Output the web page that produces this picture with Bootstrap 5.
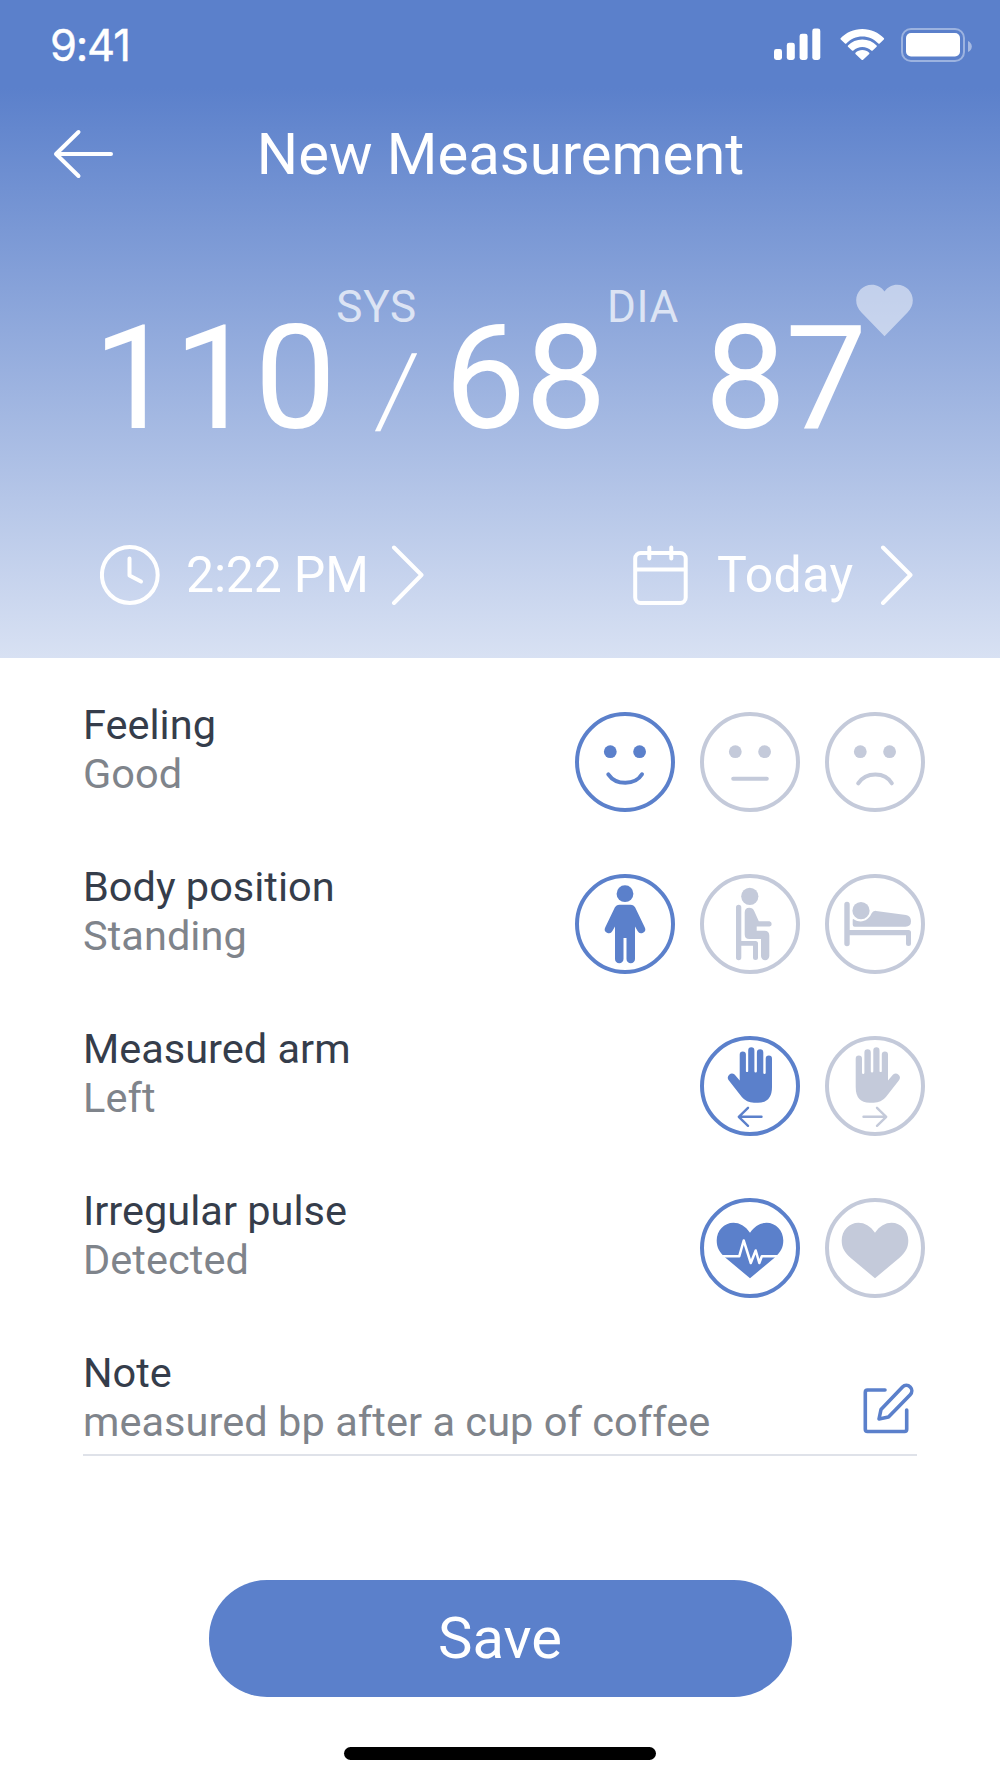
<!DOCTYPE html>
<html lang="en">
<head>
<meta charset="utf-8">
<meta name="viewport" content="width=device-width, initial-scale=1">
<title>New Measurement</title>
<link href="https://cdn.jsdelivr.net/npm/bootstrap@5.3.0/dist/css/bootstrap.min.css" rel="stylesheet">
<style>
  :root { --brand: #5b80cb; --idle: #c4cada; --ink: #353d4b; --soft: #7f848b; }
  body { font-family: Roboto, "Liberation Sans", sans-serif; color: var(--ink); background: #fff; }
  .screen { width: 1000px; height: 1778px; overflow: hidden; }
  svg { display: block; flex: none; }
  .stroked { fill: none; stroke: currentColor; stroke-width: 4; stroke-linecap: round; stroke-linejoin: round; }
  .stroked-fine { stroke-width: 2.4; }
  .bare { background: none; border: 0; padding: 0; color: inherit; }

  .hero { height: 658px; background: linear-gradient(180deg, var(--brand) 88px, #d8e1f3 658px); color: #fff; }
  .status-bar { height: 88px; padding: 0 27px 0 50px; }
  .clock-text { font: 400 43.5px/52px Inter, sans-serif; letter-spacing: -1.2px; margin-top: 19px; -webkit-text-stroke: .4px #fff; }
  .status-icons { padding-top: 28px; }
  .title-bar { height: 68px; margin-top: 32px; padding: 0 52px 0 53px; }
  .title-bar h1 { font-size: 58px; line-height: 68px; font-weight: 400; }
  .back-slot { width: 60px; }

  .readings { height: 167px; margin-top: 96px; padding-left: 93px; }
  .digits { font-size: 145.5px; line-height: 146px; letter-spacing: -1px; margin-top: 22px; }
  .unit { font-size: 44px; line-height: 44px; letter-spacing: .7px; opacity: .7; margin-top: 1px; }
  .sys-col { width: 109px; }
  .sys-col .unit { margin-left: 1px; }
  .dia-col { width: 98.6px; }
  .dia-col .unit { margin-left: 1px; }
  .divide { font-size: 101px; line-height: 103px; font-weight: 300; margin: 10px 0 0 42px; transform: skewX(-5deg); }
  .pulse-heart { margin-left: -10px; opacity: .5; }

  .when { margin-top: 94px; padding: 0 87px 0 100px; height: 60px; }
  .when button { font-size: 50px; line-height: 60px; }
  .when .time-label { margin: 0 22px 0 26px; letter-spacing: -.2px; }
  .when .day-label { margin: 0 26.5px 0 29px; letter-spacing: .4px; }

  .form-rows { padding: 42px 75px 0 83px; }
  .entry { height: 162px; }
  .entry-text { font-size: 41.5px; line-height: 49px; }
  .entry-text .value { color: var(--soft); letter-spacing: .05px; }
  .choices { gap: 25px; padding-top: 12px; }
  .choice { width: 100px; height: 100px; border: 4px solid currentColor; border-radius: 50%; background: none; padding: 0; color: var(--idle); }
  .choice.active { color: var(--brand); }
  .choice svg { width: 92px; height: 92px; fill: currentColor; }
  .note { height: 108px; margin-right: 8px; border-bottom: 2px solid #dfe2e9; }
  .note .edit { color: var(--brand); padding: 34px 1px 0 0; }
  .note .edit svg { stroke-width: 3.6; }
  .save { width: 583px; height: 117px; margin-top: 124px; border-radius: 58px; background: var(--brand); color: #fff; font-size: 58px; line-height: 68px; padding: 0 0 1px; border: 0; }
  .home-bar { width: 312px; height: 13px; margin-top: 50px; border-radius: 7px; background: #000; }
</style>
</head>
<body>
<main class="screen d-flex flex-column">
  <header class="hero">
    <div class="status-bar d-flex justify-content-between align-items-start">
      <span class="clock-text">9:41</span>
      <div class="status-icons">
        <svg width="199" height="34" viewBox="774 28 199 34" fill="#fff">
          <rect x="774" y="49" width="8" height="11" rx="2.4"/><rect x="786.8" y="42.7" width="8" height="17.300" rx="2.4"/><rect x="799.6" y="33.700" width="8" height="26.300" rx="2.4"/><rect x="812.3" y="28.500" width="8" height="31.500" rx="2.4"/>
          <path d="M862.3 29C871 29 878.500 32.500 884 38.300Q884.400 39 883.800 39.600L879.700 43.500Q879 44 878.300 43.400C874 39 868.500 36.400 862.300 36.400S850.600 39 846.300 43.400Q845.600 44 845 43.500L840.800 39.600Q840.200 39 840.600 38.300C846 32.500 853.600 29 862.300 29Z"/>
          <path d="M862.3 39.600C868 39.600 873 41.800 876.600 45.500Q877.200 46.200 876.600 46.800L872.700 50.500Q872 51.100 871.200 50.500C868.800 48.300 865.700 47 862.300 47S855.800 48.300 853.400 50.500Q852.700 51.100 852 50.500L848 46.800Q847.400 46.200 848 45.500C851.700 41.800 856.700 39.600 862.300 39.600Z"/>
          <path d="M862.3 50C865 50 867.400 51 869.200 52.800Q869.700 53.400 869.200 54L863.100 59.700Q862.300 60.400 861.600 59.700L855.500 54Q855 53.400 855.500 52.800C857.300 51 859.700 50 862.300 50Z"/>
          <rect x="902" y="29" width="62" height="32" rx="9" fill="none" stroke="#fff" stroke-opacity=".4" stroke-width="2"/>
          <rect x="906" y="33" width="54" height="23.500" rx="5"/>
          <path d="M968 41Q971.800 43 971.800 46.500T968 52Z" fill-opacity=".45"/>
        </svg>
      </div>
    </div>

    <div class="title-bar d-flex justify-content-between align-items-center">
      <button class="bare back-slot" aria-label="Back">
        <svg class="stroked" width="60" height="50" viewBox="0 0 60 50"><path d="M25.500 3L3 25L25.500 47M3.500 25H58"/></svg>
      </button>
      <h1 class="m-0">New Measurement</h1>
      <span class="back-slot"></span>
    </div>

    <section class="readings d-flex align-items-start">
      <div class="digits">110</div>
      <div class="sys-col d-flex flex-column align-items-start">
        <span class="unit">SYS</span>
        <span class="divide">/</span>
      </div>
      <div class="digits">68</div>
      <div class="dia-col"><div class="unit">DIA</div></div>
      <div class="digits">87</div>
      <svg class="pulse-heart" width="57" height="53" viewBox="0 0 57 53" fill="#fff"><path d="M28.500 7.400C25.500 3 20.700.7 16 .7C7 .7.2 7.700.2 16.300C.2 21 2 25 5.500 28.500L28.500 52.200L51.500 28.500C55 25 56.800 21 56.800 16.300C56.800 7.700 50 .7 41 .7C36.300.7 31.500 3 28.500 7.400Z"/></svg>
    </section>

    <section class="when d-flex justify-content-between">
      <button class="bare d-flex">
        <svg class="stroked" width="60" height="60" viewBox="0 0 60 60"><circle cx="29.800" cy="30" r="27.900"/><path d="M29.500 13.500V30.500L41 36.500"/></svg>
        <span class="time-label">2:22 PM</span>
        <svg class="stroked" width="33" height="60" viewBox="0 0 33 60"><path d="M3 2.500L30.500 30L3 58"/></svg>
      </button>
      <button class="bare d-flex">
        <svg class="stroked" width="55" height="60" viewBox="0 0 55 60"><rect x="2.200" y="8" width="50.500" height="50" rx="5.500"/><path d="M3 24.500H52M16.300 2.500V13.500M38.300 2.500V13.500"/></svg>
        <span class="day-label">Today</span>
        <svg class="stroked" width="33" height="60" viewBox="0 0 33 60"><path d="M3 2.500L30.500 30L3 58"/></svg>
      </button>
    </section>
  </header>

  <section class="form-rows">
    <div class="entry d-flex justify-content-between align-items-start">
      <div class="entry-text"><div>Feeling</div><div class="value">Good</div></div>
      <div class="choices d-flex">
        <button class="choice active" aria-label="Good"><svg viewBox="4 4 92 92"><circle cx="35.300" cy="39.700" r="6.400"/><circle cx="64.600" cy="39.700" r="6.400"/><path class="stroked" d="M33.300 62.300C41 73.600 60 73.600 67 62.300"/></svg></button>
        <button class="choice" aria-label="Neutral"><svg viewBox="4 4 92 92"><circle cx="35.300" cy="39.700" r="6.400"/><circle cx="64.600" cy="39.700" r="6.400"/><path class="stroked" d="M33.200 66.800H66.800"/></svg></button>
        <button class="choice" aria-label="Bad"><svg viewBox="4 4 92 92"><circle cx="35.300" cy="39.700" r="6.400"/><circle cx="64.600" cy="39.700" r="6.400"/><path class="stroked" d="M33.200 71.300C41 59.500 60 59.500 66.800 71.300"/></svg></button>
      </div>
    </div>

    <div class="entry d-flex justify-content-between align-items-start">
      <div class="entry-text"><div>Body position</div><div class="value">Standing</div></div>
      <div class="choices d-flex">
        <button class="choice active" aria-label="Standing"><svg viewBox="4 4 92 92"><circle cx="50" cy="19.700" r="8.400"/><path d="M44.500 30.700H55.500Q58.800 30.700 60.200 33.600L69.700 53.200A4 4 0 0 1 62.600 57L60 52.500V85A4.200 4.200 0 0 1 51.500 85V64H48.500V85A4.200 4.200 0 0 1 40 85V52.500L37.400 57A4 4 0 0 1 30.300 53.200L39.800 33.600Q41.200 30.700 44.500 30.700Z"/></svg></button>
        <button class="choice" aria-label="Sitting"><svg viewBox="4 4 92 92"><circle cx="49.800" cy="22.300" r="8.600"/><path d="M36 33.300A2.600 2.600 0 0 1 41.300 33.300V67H55.500Q58 67 58 69.500V83.500A2.500 2.500 0 0 1 53 83.500V71.800H41.300V83.500A2.600 2.600 0 0 1 36 83.500Z"/><path d="M44.700 38.500Q44.700 33.700 49.300 33.700Q52.700 33.700 54.200 37L58.800 47.300H69.500A2.700 2.700 0 0 1 69.500 52.600H56.700V56.700H64.500Q69.300 56.700 69.300 61.500V82A4 4 0 0 1 61 82V65H49.500Q44.700 65 44.700 60.500Z"/></svg></button>
        <button class="choice" aria-label="Lying"><svg viewBox="4 4 92 92"><circle cx="36" cy="36.700" r="8.600"/><path d="M19.300 30.500A2.700 2.700 0 0 1 24.700 30.500V56H83.500Q86 56 86 58.500V69.500A2.500 2.500 0 0 1 81 69.500V61.300H24.700V69.500A2.700 2.700 0 0 1 19.300 69.500Z"/><path d="M27.700 45.800Q27.700 44.800 28.700 45.200C36 50 43.500 46.500 46.500 39.500Q48 36.600 51 36.900L81 41Q86 42 86 47.300Q86 52.700 80.500 52.700H29.700Q27.700 52.700 27.700 50.700Z"/></svg></button>
      </div>
    </div>

    <div class="entry d-flex justify-content-between align-items-start">
      <div class="entry-text"><div>Measured arm</div><div class="value">Left</div></div>
      <div class="choices d-flex">
        <button class="choice active" aria-label="Left"><svg viewBox="4 4 92 92"><path id="palm" d="M39.700 18.500A3.100 3.100 0 0 1 45.900 18.500V35.200A1.200 1.200 0 0 0 48.200 35.200V14.400A3.100 3.100 0 0 1 54.400 14.400V35.200A1.200 1.200 0 0 0 56.900 35.200V16.400A3.100 3.100 0 0 1 63.300 16.400V36.700A1.200 1.200 0 0 0 65.700 36.700V22.700A3.100 3.100 0 0 1 72 22.700V51Q72 66.700 58 66.700H54Q46.500 66.700 41.800 61L28.700 44.200A4.100 4.100 0 0 1 34.600 38.600L39.700 44.500Z"/><path class="stroked stroked-fine" d="M48 71.800L38.800 80.800L48 89.800M39 80.800H61.500"/></svg></button>
        <button class="choice" aria-label="Right"><svg viewBox="4 4 92 92"><use href="#palm" transform="translate(102.700 0) scale(-1 1)"/><path class="stroked stroked-fine" d="M52 71.800L61.200 80.800L52 89.800M61 80.800H38.500"/></svg></button>
      </div>
    </div>

    <div class="entry d-flex justify-content-between align-items-start">
      <div class="entry-text"><div>Irregular pulse</div><div class="value">Detected</div></div>
      <div class="choices d-flex">
        <button class="choice active" aria-label="Detected"><svg viewBox="4 4 92 92"><path id="heart" d="M50 34.700C45.500 28 39.500 24.700 33.500 24.700C24 24.700 16.700 32.500 16.700 42.500C16.700 49.500 19.500 54.500 25.500 59.700L50 80.300L74.500 59.700C80.500 54.500 83.300 49.500 83.300 42.500C83.300 32.500 76 24.700 66.500 24.700C60.500 24.700 54.500 28 50 34.700Z"/><path d="M20 58.200H39.300L43.700 42.500L50.800 65L55.700 52.500L59.300 65L61.800 58.200H80" fill="none" stroke="#fff" stroke-width="2.500" stroke-linejoin="round"/></svg></button>
        <button class="choice" aria-label="Not detected"><svg viewBox="4 4 92 92"><use href="#heart"/></svg></button>
      </div>
    </div>

    <div class="note d-flex justify-content-between align-items-start">
      <div class="entry-text"><div>Note</div><div class="value">measured bp after a cup of coffee</div></div>
      <button class="bare edit" aria-label="Edit note">
        <svg class="stroked" width="54" height="54" viewBox="0 0 54 54"><path d="M23 8H5.500Q3.300 8 3.300 10.200V47.300Q3.300 49.500 5.500 49.500H42.500Q44.700 49.500 44.700 47.300V28"/><path d="M17 37L19 27.500L40.500 5A5.400 5.400 0 0 1 48.200 12.700L26.500 35Z"/></svg>
      </button>
    </div>
  </section>

  <button class="save btn align-self-center flex-shrink-0">Save</button>
  <div class="home-bar align-self-center flex-shrink-0"></div>
</main>
<script src="https://cdn.jsdelivr.net/npm/bootstrap@5.3.0/dist/js/bootstrap.bundle.min.js"></script>
</body>
</html>
